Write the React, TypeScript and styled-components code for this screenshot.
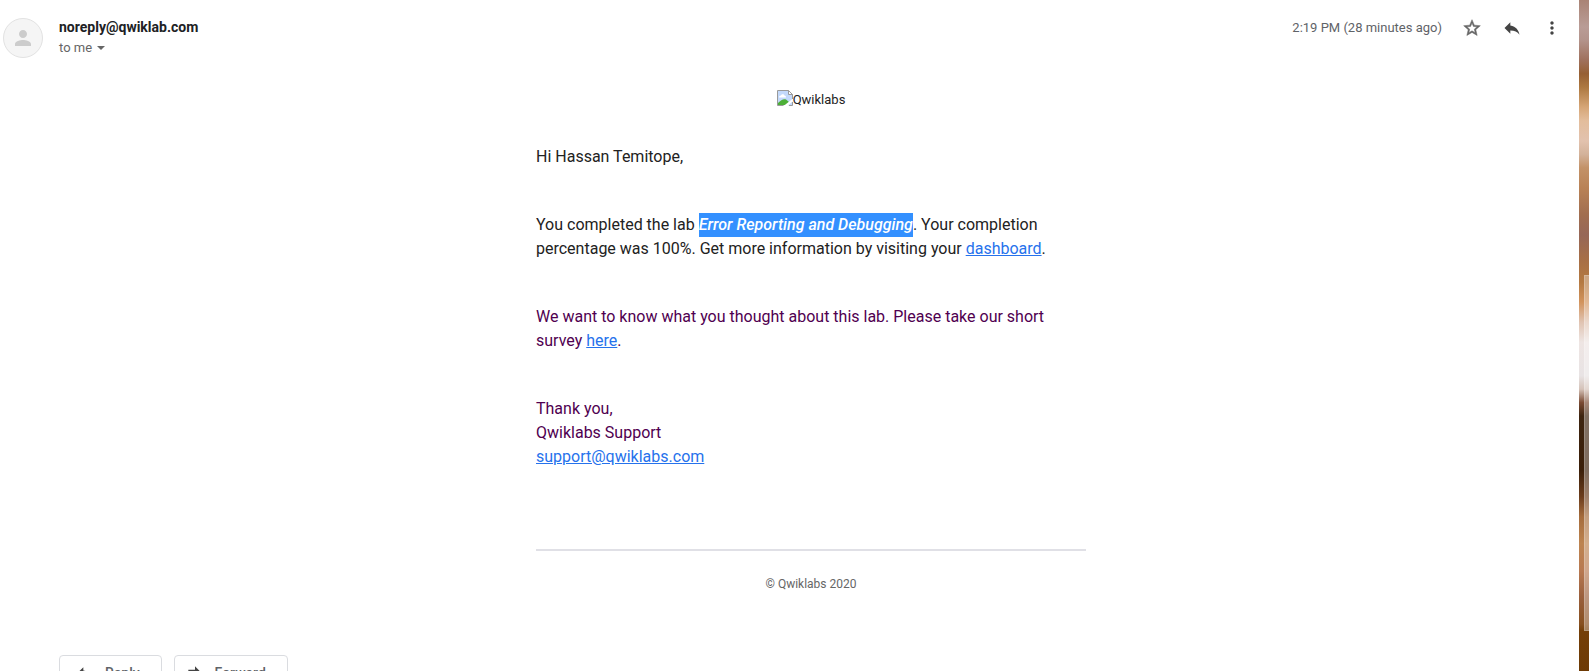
import React from "react";
import styled, { createGlobalStyle } from "styled-components";

const GlobalStyle = createGlobalStyle`
  *, *::before, *::after { box-sizing: border-box; }
  body {
    margin: 0;
    background: #fff;
    font-family: Roboto, "Liberation Sans", sans-serif;
    color: #222;
  }
`;

const Window = styled.div`
  display: flex;
  height: 100vh;
  overflow: hidden;
`;

const Mail = styled.main`
  flex: 1;
  min-width: 0;
  background: #fff;
`;

const Wallpaper = styled.aside`
  position: relative;
  flex: none;
  width: 10px;
  background: linear-gradient(
    to bottom,
    #a98375 0%,
    #b99c96 4%,
    #b3938b 6%,
    #9f705c 9%,
    #965f33 11%,
    #ad7840 13%,
    #d6a677 16%,
    #e3bd9c 18%,
    #e2c2ae 21%,
    #d3b29a 23%,
    #c39268 25%,
    #b98256 28%,
    #a16e50 32%,
    #966758 35%,
    #a86f45 39%,
    #b47941 42%,
    #d2935c 45%,
    #e0c3b1 48%,
    #eee5e3 51%,
    #e8e3e4 56%,
    #d5c2b8 58%,
    #7a4a33 60%,
    #3d2410 62%,
    #3a1e08 70%,
    #6b3c1c 74%,
    #a56c3c 77%,
    #bd8450 81%,
    #b87951 85%,
    #9a5f3c 89%,
    #87501f 93%,
    #743f08 94%,
    #6d3a05 100%
  );
`;

const ScrollThumb = styled.div`
  position: absolute;
  top: 41%;
  bottom: 6%;
  right: 0;
  width: 5px;
  background: rgba(255, 255, 255, 0.35);
  border: 1px solid rgba(255, 255, 255, 0.2);
  border-right: 0;
`;

const Header = styled.header`
  display: flex;
  align-items: flex-start;
  padding: 18px 7px 0 3px;
`;

const Avatar = styled.div`
  display: flex;
  align-items: center;
  justify-content: center;
  width: 40px;
  height: 40px;
  margin-right: 16px;
  border: 1px solid #e2e2e2;
  border-radius: 50%;
  background: #f5f5f5;
`;

const Sender = styled.div`
  flex: 1;
  min-width: 0;
`;

const SenderName = styled.h3`
  margin: 0 0 2px;
  font-size: 14px;
  line-height: 18px;
  font-weight: 700;
  color: #202124;
`;

const Recipient = styled.button`
  display: flex;
  align-items: center;
  gap: 5px;
  padding: 0;
  border: 0;
  background: none;
  font: inherit;
  font-size: 13px;
  line-height: 20px;
  color: #666;
`;

const Actions = styled.div`
  display: flex;
  align-items: center;
  height: 20px;
`;

const Time = styled.time`
  margin-right: 10px;
  font-size: 13px;
  line-height: 20px;
  color: #5f6368;
`;

const IconButton = styled.button`
  display: flex;
  align-items: center;
  justify-content: center;
  width: 40px;
  height: 20px;
  padding: 0;
  border: 0;
  background: none;
`;

const Icon = styled.svg<{ $size?: number; $color?: string }>`
  display: block;
  flex: none;
  width: ${(p) => p.$size ?? 20}px;
  height: ${(p) => p.$size ?? 20}px;
  fill: ${(p) => p.$color ?? "#444"};
`;

const Content = styled.div`
  padding: 32px 16px 0 59px;
`;

const Letter = styled.article`
  max-width: 550px;
  margin: 0 auto;
  font-size: 16px;
  line-height: 24px;
`;

const Logo = styled.div`
  display: flex;
  justify-content: center;
  align-items: flex-start;
  height: 20px;
  margin-bottom: 35px;
  font-size: 13px;
  line-height: 20px;
`;

const Paragraph = styled.p<{ $quoted?: boolean }>`
  margin: 0 0 44px;
  color: ${(p) => (p.$quoted ? "#500050" : "#222")};
`;

const Selected = styled.em`
  display: inline-block;
  height: 24px;
  background: #3390ff;
  color: #fff;
  font-weight: 500;
`;

const Link = styled.a`
  color: #2672ec;
  text-decoration: underline;
`;

const Footer = styled.footer`
  margin-top: 80px;
  padding-top: 23px;
  border-top: 2px solid #e0e0e6;
  text-align: center;
  font-size: 12px;
  line-height: 20px;
  color: #666;
`;

const Replies = styled.div`
  display: flex;
  gap: 12px;
  padding: 61px 0 24px;
`;

const ReplyButton = styled.button<{ $inset: number }>`
  display: flex;
  align-items: center;
  gap: 10px;
  height: 36px;
  padding: 0 21px 0 ${(p) => p.$inset}px;
  border: 1px solid #dadce0;
  border-radius: 4px;
  background: #fff;
  font: inherit;
  font-size: 14px;
  font-weight: 500;
  color: #5f6368;
`;

const REPLY = "M10 9V5l-7 7 7 7v-4.100c5 0 8.500 1.600 11 5.100-1-5-4-10-11-11z";

function BrokenImage() {
  return (
    <svg width="16" height="16" viewBox="0 0 16 16" aria-hidden="true">
      <path d="M0.500 0.500H11.500L15.500 4.500V15.500H0.500z" fill="#c3d9fb" />
      <path d="M2 7.500c0-1.500 1-2.200 2-2 .5-1.700 3-1.700 3.500 0 1.200 0 1.500 1 1.500 2z" fill="#fff" />
      <path d="M1 15v-2c3-3.500 6-4.500 8-3.500l3 2.500v3z" fill="#4caf37" />
      <path d="M16 8.500V11l-5.500 5H6.500z" fill="#fff" />
      <path d="M6.500 15.500H0.500V0.500H11.500L15.500 4.500V9M15.500 12v3.500H12" fill="none" stroke="#9a9a9a" />
      <path d="M11.500 0.500V4.500H15.500z" fill="#fff" stroke="#9a9a9a" />
    </svg>
  );
}

export default function App() {
  return (
    <Window>
      <GlobalStyle />
      <Mail>
        <Header>
          <Avatar>
            <Icon $size={24} $color="#ccc" viewBox="0 0 24 24" aria-hidden="true">
              <path d="M12 12c2.210 0 4-1.790 4-4s-1.790-4-4-4-4 1.790-4 4 1.790 4 4 4zm0 2c-2.670 0-8 1.340-8 4v2h16v-2c0-2.660-5.330-4-8-4z" />
            </Icon>
          </Avatar>
          <Sender>
            <SenderName>noreply@qwiklab.com</SenderName>
            <Recipient type="button">
              to me
              <svg width="8" height="4" viewBox="0 0 8 4" aria-hidden="true">
                <path d="M0 0h8L4 4z" fill="#666" />
              </svg>
            </Recipient>
          </Sender>
          <Actions>
            <Time>2:19 PM (28 minutes ago)</Time>
            <IconButton type="button" aria-label="Star">
              <Icon $color="#666" viewBox="0 0 24 24" stroke="#666" strokeWidth="0.6">
                <path d="M22 9.240l-7.190-.62L12 2 9.190 8.630 2 9.240l5.460 4.730L5.820 21 12 17.270 18.180 21l-1.630-7.030L22 9.240zM12 15.400l-3.760 2.270 1-4.280-3.320-2.880 4.380-.38L12 6.100l1.710 4.040 4.380.38-3.320 2.880 1 4.280L12 15.400z" />
              </Icon>
            </IconButton>
            <IconButton type="button" aria-label="Reply">
              <Icon viewBox="0 0 24 24">
                <path d={REPLY} />
              </Icon>
            </IconButton>
            <IconButton type="button" aria-label="More">
              <Icon viewBox="0 0 24 24">
                <path d="M12 8c1.100 0 2-.9 2-2s-.9-2-2-2-2 .9-2 2 .9 2 2 2zm0 2c-1.100 0-2 .9-2 2s.9 2 2 2 2-.9 2-2-.9-2-2-2zm0 6c-1.100 0-2 .9-2 2s.9 2 2 2 2-.9 2-2-.9-2-2-2z" />
              </Icon>
            </IconButton>
          </Actions>
        </Header>
        <Content>
          <Letter>
            <Logo>
              <BrokenImage />
              Qwiklabs
            </Logo>
            <Paragraph>Hi Hassan Temitope,</Paragraph>
            <Paragraph>
              You completed the lab <Selected>Error Reporting and Debugging</Selected>. Your completion
              percentage was 100%. Get more information by visiting your <Link href="#dashboard">dashboard</Link>.
            </Paragraph>
            <Paragraph $quoted>
              We want to know what you thought about this lab. Please take our short survey{" "}
              <Link href="#survey">here</Link>.
            </Paragraph>
            <Paragraph $quoted>
              Thank you,
              <br />
              Qwiklabs Support
              <br />
              <Link href="mailto:support@qwiklabs.com">support@qwiklabs.com</Link>
            </Paragraph>
            <Footer>© Qwiklabs 2020</Footer>
          </Letter>
          <Replies>
            <ReplyButton type="button" $inset={15}>
              <Icon viewBox="0 0 24 24" aria-hidden="true">
                <path d={REPLY} />
              </Icon>
              Reply
            </ReplyButton>
            <ReplyButton type="button" $inset={10}>
              <Icon viewBox="0 0 24 24" aria-hidden="true">
                <path d="M12 8V4l8 8-8 8v-4H4V8z" />
              </Icon>
              Forward
            </ReplyButton>
          </Replies>
        </Content>
      </Mail>
      <Wallpaper>
        <ScrollThumb />
      </Wallpaper>
    </Window>
  );
}
